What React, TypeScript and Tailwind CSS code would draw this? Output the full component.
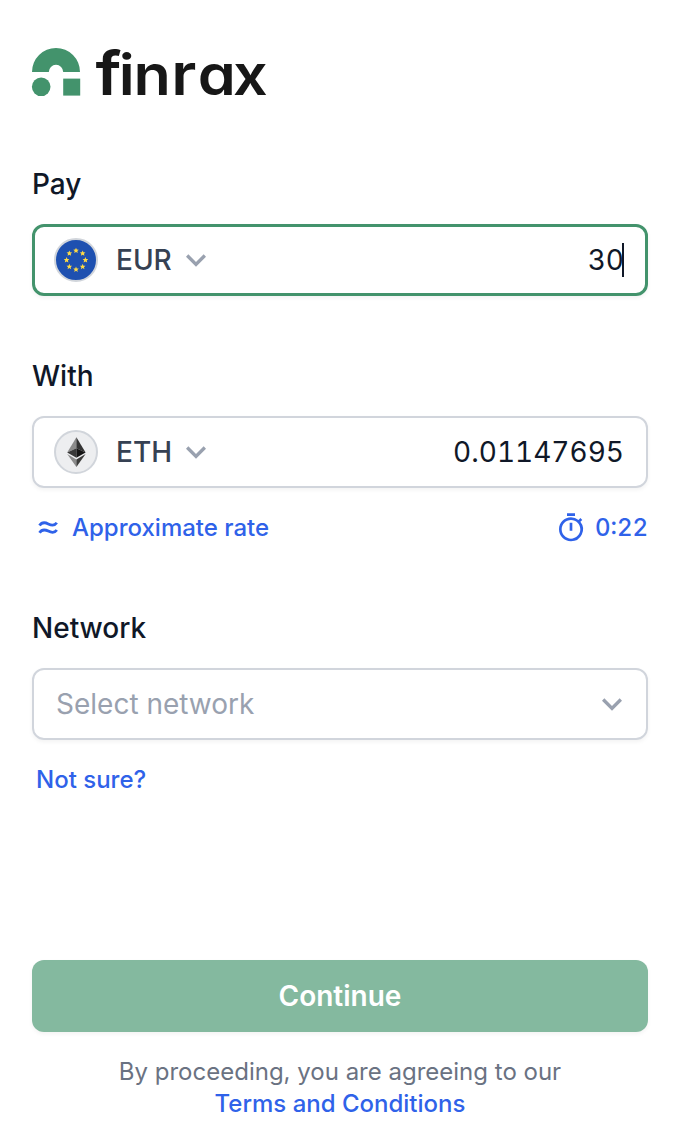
import { useState } from 'react';
import { MdExpandMore, MdOutlineTimer } from 'react-icons/md';

const STARS = [0, 45, 90, 135, 180, 225, 270, 315];

export default function App() {
  const [amount, setAmount] = useState('30');

  return (
    <main className="flex h-[1144px] w-[680px] flex-col bg-white px-8 pt-12 font-['Inter',sans-serif] text-[28px] text-gray-900">
      <Logo />

      <Label className="mt-[68px]">Pay</Label>
      <div className="mt-5 flex h-18 items-center rounded-xl border-3 border-[#43936c] pr-[21px] pl-[19px] shadow-[0_2px_4px_rgba(0,0,0,0.05)]">
        <CurrencyButton code="EUR" icon={<EuroFlag />} />
        <div className="relative ml-auto flex items-center">
          <input
            value={amount}
            onChange={(e) => setAmount(e.target.value)}
            className="w-80 bg-transparent text-right tabular-nums outline-none"
          />
          <span className="absolute right-0 h-[34px] w-0.5 bg-gray-900" />
        </div>
      </div>

      <Label className="mt-[60px]">With</Label>
      <div className="mt-5 flex h-18 items-center rounded-xl border-2 border-gray-300 pr-[22px] pl-5 shadow-[0_2px_4px_rgba(0,0,0,0.05)]">
        <CurrencyButton code="ETH" icon={<EthIcon />} />
        <span className="ml-auto tabular-nums">0.01147695</span>
      </div>
      <div className="mt-5 flex h-10 items-center justify-between text-2xl font-medium text-[#2f62e9]">
        <div className="flex items-center gap-3 pl-1.5">
          <ApproxIcon />
          <span>Approximate rate</span>
        </div>
        <div className="flex items-center gap-2">
          <MdOutlineTimer className="size-8" />
          <span className="tabular-nums">0:22</span>
        </div>
      </div>

      <Label className="mt-[60px]">Network</Label>
      <button className="mt-5 flex h-18 shrink-0 items-center justify-between rounded-xl border-2 border-gray-300 pr-3.5 pl-[22px] shadow-[0_2px_4px_rgba(0,0,0,0.05)]">
        <span className="text-gray-400">Select network</span>
        <MdExpandMore className="size-10 text-gray-400" />
      </button>
      <a className="mt-5 ml-1 h-10 text-2xl leading-10 font-medium text-[#2f62e9]">Not sure?</a>

      <button className="mt-40 h-18 shrink-0 rounded-xl bg-[#84b99f] font-semibold text-white shadow-[0_2px_4px_rgba(0,0,0,0.05)]">
        Continue
      </button>
      <p className="mt-6 text-center text-2xl leading-8 text-gray-500">
        By proceeding, you are agreeing to our
        <br />
        <a className="font-medium text-[#2f62e9]">Terms and Conditions</a>
      </p>
    </main>
  );
}

function Label({ className, children }: { className: string; children: string }) {
  return <label className={`block h-10 leading-10 font-medium ${className}`}>{children}</label>;
}

function CurrencyButton({ code, icon }: { code: string; icon: React.ReactNode }) {
  return (
    <button className="flex items-center font-medium text-gray-700">
      {icon}
      <span className="ml-[18px] w-[60px] text-left">{code}</span>
      <MdExpandMore className="size-10 text-gray-400" />
    </button>
  );
}

function Logo() {
  return (
    <svg width="240" height="48" viewBox="0 0 240 48" className="shrink-0 overflow-visible">
      <g fill="#43936c">
        <path d="M0 24A24 24 0 0 1 48 24H31.2A7.2 7.2 0 0 0 16.8 24Z" />
        <circle cx="9.2" cy="38.8" r="9.3" />
        <rect x="31.2" y="30.6" width="17" height="17" />
      </g>
      <text
        transform="translate(0 47.3) scale(1.09 1)"
        x="58.3 79.5 93.2 127.8 152 184.5"
        fill="#171717"
        className="text-[56px] font-semibold [font-feature-settings:'cv11']"
      >
        <tspan className="text-[61px]">f</tspan>
        <tspan>in</tspan>
        <tspan className="text-[58px]">r</tspan>
        <tspan>ax</tspan>
      </text>
    </svg>
  );
}

function EuroFlag() {
  return (
    <svg className="size-11" viewBox="-22 -22 44 44">
      <circle r="21" fill="#1e50b0" stroke="#d1d5db" strokeWidth="2" />
      {STARS.map((angle) => (
        <path
          key={angle}
          transform={`rotate(${angle}) translate(0 -9.4) rotate(${-angle})`}
          d="M0-2.9.8-1 2.8-.9 1.3.5 1.8 2.5 0 1.4-1.8 2.5-1.3.5-2.8-.9-.8-1Z"
          fill="#ffda44"
        />
      ))}
    </svg>
  );
}

function EthIcon() {
  return (
    <svg className="size-11" viewBox="0 0 44 44">
      <circle cx="22" cy="22" r="21" fill="#edeef0" stroke="#d1d5db" strokeWidth="2" />
      <path d="M22.4 7.3V18.2L13.2 22.4Z" fill="#8c8c8c" />
      <path d="M22.4 7.3V18.2L31.6 22.4Z" fill="#343434" />
      <path d="M22.4 18.2V27.8L13.2 22.4Z" fill="#393939" />
      <path d="M22.4 18.2V27.8L31.6 22.4Z" fill="#141414" />
      <path d="M13.2 24.1 22.4 29.6V37Z" fill="#8c8c8c" />
      <path d="M31.6 24.1 22.4 29.6V37Z" fill="#3c3c3b" />
    </svg>
  );
}

function ApproxIcon() {
  return (
    <svg
      width="22"
      height="20"
      viewBox="0 0 22 20"
      fill="none"
      stroke="currentColor"
      strokeWidth="2.8"
    >
      <path d="M1.5 7.5C3.5 4.5 7 4.2 10.3 5.9S17 7.3 18.8 4.8" />
      <path d="M1.5 14.7C3.5 11.7 7 11.4 10.3 13.1S17 14.5 18.8 12" />
    </svg>
  );
}
